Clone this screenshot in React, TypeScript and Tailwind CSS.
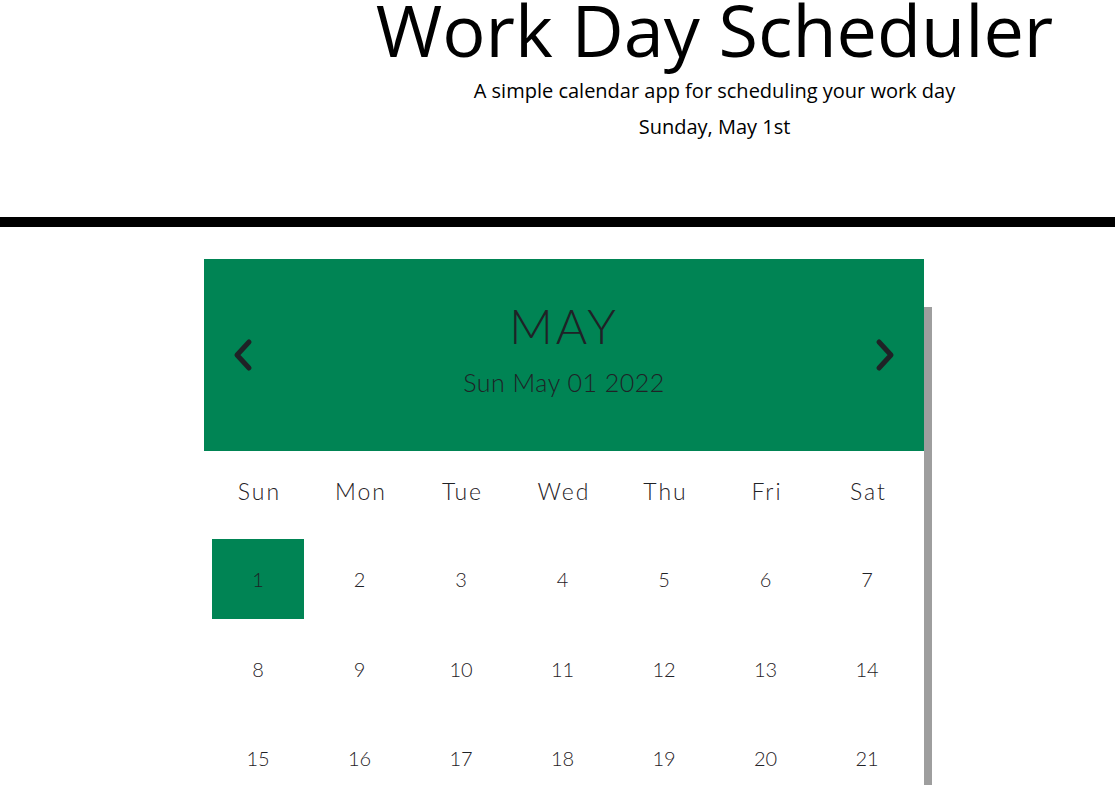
import React from 'react';

const WEEK_DAYS = ['Sun', 'Mon', 'Tue', 'Wed', 'Thu', 'Fri', 'Sat'];
const DAYS = Array.from({ length: 21 }, (_, i) => i + 1);

const Chevron: React.FC<{ dir: 'left' | 'right' }> = ({ dir }) => (
  <svg width="22" height="34" viewBox="0 0 22 34" fill="none">
    <polyline
      points={dir === 'left' ? '17,4 5,17 17,30' : '5,4 17,17 5,30'}
      stroke="#1f2226"
      strokeWidth="5"
      strokeLinecap="round"
      strokeLinejoin="round"
    />
  </svg>
);

const App: React.FC = () => {
  return (
    <div className="min-h-[785px] bg-white overflow-hidden">
      {/* Header */}
      <header className="h-[227px] border-b-[10px] border-black pl-[314px] text-center text-black font-['Open_Sans',sans-serif]">
        <h1 className="text-[72px] leading-[58px]">Work Day Scheduler</h1>
        <p className="mt-[19px] text-[20px] leading-[28px]">A simple calendar app for scheduling your work day</p>
        <p className="mt-[8px] text-[20px] leading-[28px]">Sunday, May 1st</p>
      </header>

      {/* Calendar */}
      <div className="ml-[204px] mt-[32px] w-[720px] bg-white shadow-[8px_48px_0_#9e9e9e] text-[#1f2226] font-['Lato',sans-serif]">
        <div className="h-[192px] bg-[#008454] flex items-center justify-between px-[28px]">
          <Chevron dir="left" />
          <div className="flex flex-col items-center pb-[15px]">
            <div className="text-[48px] leading-[56px] tracking-[3px] font-light">MAY</div>
            <div className="mt-[13px] text-[25px] leading-[30px] tracking-[0.5px] font-light">Sun May 01 2022</div>
          </div>
          <Chevron dir="right" />
        </div>

        <div className="pl-[8px] pb-[8px]">
          <div className="grid grid-cols-[repeat(7,92px)] gap-x-[9.5px] h-[80px] items-center">
            {WEEK_DAYS.map((d) => (
              <div key={d} className="text-center text-[23px] tracking-[2px] font-light pl-[3px]">
                {d}
              </div>
            ))}
          </div>
          <div className="mt-[8px] grid grid-cols-[repeat(7,92px)] gap-x-[9.5px] gap-y-[9.5px]">
            {DAYS.map((n) => (
              <div
                key={n}
                className={`h-[80px] flex items-center justify-center text-[20px] font-light ${n === 1 ? 'bg-[#008454]' : ''}`}
              >
                {n}
              </div>
            ))}
          </div>
        </div>
      </div>
    </div>
  );
};

export default App;
